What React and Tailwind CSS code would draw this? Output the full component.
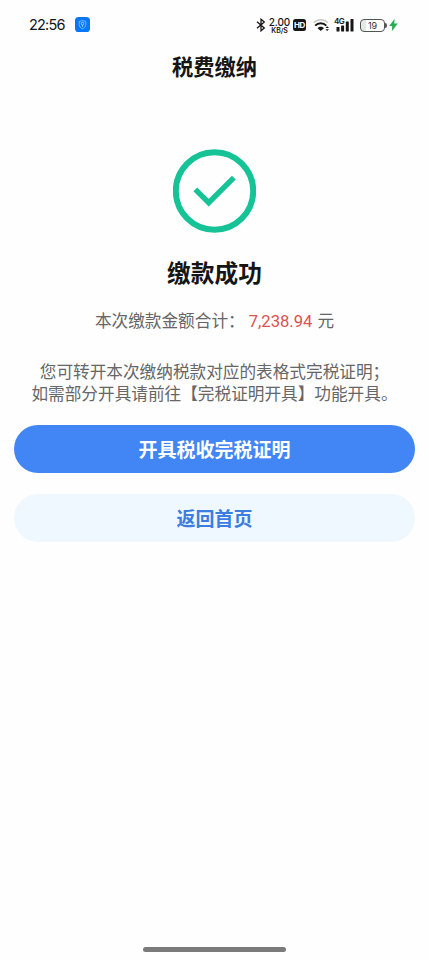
function StatusBar() {
  return (
    <header className="flex h-[50px] shrink-0 items-center justify-between pr-[31px] pl-[29px] text-[#161616]">
      <div className="flex items-center gap-[10px]">
        <span className="w-9 text-[14.5px] leading-5 whitespace-nowrap font-['Inter',sans-serif] tracking-[-0.8px]">22:56</span>
        <svg className="-mt-px size-[15px]" viewBox="0 0 15 15" fill="none">
          <rect width="15" height="15" rx="3.6" fill="#0878f8" />
          <path d="M7.5 3.3 C8.6 4.1 9.6 4.3 10.8 4.4 V7.4 C10.8 9.6 9.4 11 7.5 11.8 C5.6 11 4.2 9.6 4.2 7.4 V4.4 C5.4 4.3 6.4 4.1 7.5 3.3 Z" stroke="#8ec8ff" strokeWidth="0.8" />
          <circle cx="7.5" cy="6.6" r="1.3" stroke="#b7dcff" strokeWidth="0.8" />
          <path d="M7.5 8 V9.8" stroke="#b7dcff" strokeWidth="0.8" />
        </svg>
      </div>
      <div className="flex items-center">
        <svg className="mr-[3px] h-[14px] w-[10px]" viewBox="0 0 10 14" fill="none" stroke="currentColor" strokeWidth="1.3">
          <path d="M1 3.8 L8.3 10 L5 12.8 V1.2 L8.3 4 L1 10.2" />
        </svg>
        <div className="mr-[3px] flex w-[21px] flex-col items-center font-['Inter',sans-serif]">
          <span className="text-[10px] leading-[10px] font-medium tracking-[-0.1px]">2.00</span>
          <span className="text-[7px] leading-[7px] font-semibold tracking-[-0.1px]">KB/S</span>
        </div>
        <div className="mr-[7px] flex h-[12px] w-[13px] items-center justify-center rounded-[2.5px] bg-[#161616] font-['Inter',sans-serif] text-[8px] leading-none font-bold tracking-[-0.3px] text-white">HD</div>
        <svg className="mr-[5px] h-[14px] w-[17px]" viewBox="0 0 17 14" fill="none">
          <path d="M0.7 4.8 C4.6 0.8 10.9 0.8 14.8 4.8" stroke="#c9c9c9" strokeWidth="1.6" />
          <path d="M2.2 7.6 C5.2 4.3 10.3 4.3 13.3 7.6" stroke="currentColor" strokeWidth="2" />
          <path d="M4.6 10.2 C6.4 8.3 9.1 8.3 10.9 10.2 L7.75 13 Z" fill="currentColor" />
          <path d="M12.4 10 L14.2 8.2 L16 10 Z M12.4 11.3 L14.2 13.1 L16 11.3 Z" fill="currentColor" />
        </svg>
        <div className="relative mr-[6px] h-[14px] w-[19px]">
          <span className="absolute top-[-1px] left-[-1px] font-['Inter',sans-serif] text-[8px] leading-[8px] font-semibold tracking-[-0.5px]">4G</span>
          <svg className="h-[14px] w-[19px]" viewBox="0 0 19 14" fill="currentColor">
            <rect x="1.5" y="9" width="3" height="4.5" rx="0.5" />
            <rect x="6.1" y="7.5" width="3" height="6" rx="0.5" />
            <rect x="10.8" y="3.5" width="3" height="10" rx="0.5" />
            <rect x="15.5" y="1" width="3" height="12.5" rx="0.5" />
          </svg>
        </div>
        <div className="flex h-[13px] w-[25px] items-center justify-center rounded-[4px] border border-[#555] bg-linear-to-r from-[#e3eae5] from-20% to-white to-20% font-['Inter',sans-serif] text-[9px] leading-none text-[#333]">19</div>
        <div className="h-[5px] w-[2px] rounded-r-full bg-[#555]" />
        <svg className="ml-[2px] h-[14px] w-[9px]" viewBox="0 0 9 14" fill="#27ae52">
          <path d="M5.6 0.7 L0.2 7.9 H3.2 L2.8 13.2 L8.8 5.6 H5.3 Z" />
        </svg>
      </div>
    </header>
  );
}

export default function App() {
  return (
    <div className="flex h-[960px] w-full flex-col bg-[#fefefe] font-['Noto_Sans_CJK_SC',sans-serif]">
      <StatusBar />
      <h1 className="h-8 shrink-0 text-center text-[21.3px] leading-8 font-bold text-[#151515]">税费缴纳</h1>

      <main className="flex flex-1 flex-col items-center px-[14px] pt-[67px]">
        <svg className="h-[84px] w-[83px]" viewBox="0 0 83 84" fill="none" stroke="#15c396">
          <circle cx="41.5" cy="42" r="38.7" strokeWidth="6" />
          <path d="M22.3 40.3 L35.7 53.7 L60.8 28.6" strokeWidth="5.4" />
        </svg>
        <h2 className="mt-[21px] text-[23.7px] leading-9 font-bold text-[#151515]">缴款成功</h2>
        <p className="mt-[18px] flex items-baseline text-[16.65px] leading-6 whitespace-nowrap text-[#666]">
          <span>本次缴款金额合计：</span>
          <span className="ml-1 font-['Roboto',sans-serif] text-[#d9534f]">7,238.94</span>
          <span className="ml-[5px]">元</span>
        </p>
        <p className="mt-[26px] text-center text-[16.65px] leading-[22px] whitespace-nowrap text-[#666]">
          您可转开本次缴纳税款对应的表格式完税证明；
          <br />
          如需部分开具请前往【完税证明开具】功能开具。
        </p>
        <button className="mt-[21px] h-12 w-full rounded-full bg-[#4285f4] pb-[2px] text-[19px] leading-none font-bold text-white">开具税收完税证明</button>
        <button className="mt-[21px] h-12 w-full rounded-full bg-[#eff8fe] pb-[2px] text-[19px] leading-none font-bold text-[#3c7de0]">返回首页</button>
      </main>

      <footer className="flex h-[13px] shrink-0 justify-center">
        <div className="h-[5px] w-[143px] rounded-full bg-[#7b7b7b]" />
      </footer>
    </div>
  );
}
